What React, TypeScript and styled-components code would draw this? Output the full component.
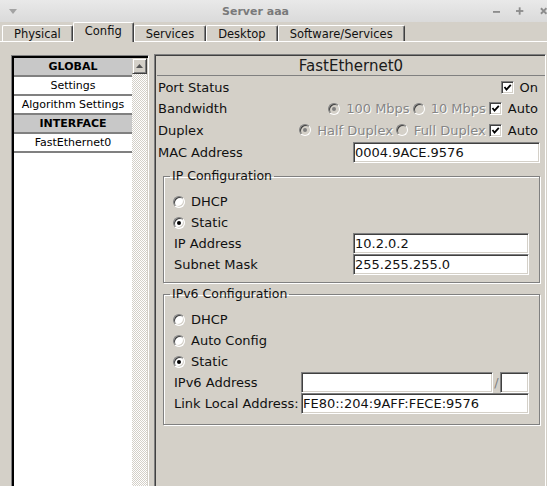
import React from "react";
import styled, { createGlobalStyle } from "styled-components";

const GlobalStyle = createGlobalStyle`
  html, body { margin: 0; padding: 0; background: #d4d0c8; }
  body { font-family: "DejaVu Sans", Verdana, sans-serif; color: #000; }
  #root { height: 100vh; }
`;

const Window = styled.div`
  height: 100vh;
  overflow: hidden;
  display: flex;
  flex-direction: column;
  background: #d4d0c8;
`;

const TitleBar = styled.div`
  flex: none;
  height: 22px;
  display: grid;
  grid-template-columns: 30px 1fr 66px;
  align-items: center;
  background: linear-gradient(#e9e9e9, #dadada);
`;

const MenuArrow = styled.span`
  display: flex;
  align-items: center;
  padding-left: 9px;
`;

const Title = styled.div`
  text-align: center;
  font-size: 11px;
  font-weight: bold;
  color: #7a7a7a;
`;

const WinButtons = styled.div`
  display: flex;
  align-items: center;
  gap: 16px;
  padding-left: 12px;
  overflow: hidden;
`;

const TabBar = styled.div`
  flex: none;
  height: 19px;
  display: flex;
  align-items: flex-end;
  padding-left: 2px;
  border-bottom: 1px solid #fff;
`;

const Tab = styled.div<{ $active?: boolean }>`
  box-sizing: border-box;
  height: ${(p) => (p.$active ? 20 : 16)}px;
  margin-bottom: ${(p) => (p.$active ? -1 : 0)}px;
  padding: 0 11px ${(p) => (p.$active ? 3 : 0)}px;
  display: flex;
  align-items: center;
  font-size: 11.5px;
  color: #111;
  background: #d4d0c8;
  border-top: 1px solid #fff;
  border-left: 1px solid #fff;
  border-right: 1px solid #404040;
  border-radius: 2px 2px 0 0;
  box-shadow: inset -1px 0 0 #808080;
`;

const Body = styled.div`
  flex: 1;
  min-height: 0;
  display: flex;
  padding: 13px 0 0 11px;
`;

const Sidebar = styled.div`
  flex: none;
  width: 138px;
  box-sizing: border-box;
  display: flex;
  padding: 2px 1px 0 2px;
  border-top: 1px solid #808080;
  border-left: 1px solid #808080;
  border-right: 1px solid #fff;
  box-shadow: inset 2px 2px 0 #000, inset -1px 0 0 #d4d0c8;
`;

const List = styled.div`
  flex: 1;
  background: #fff;
  display: flex;
  flex-direction: column;
`;

const ListHeader = styled.div`
  height: 17px;
  line-height: 17px;
  text-align: center;
  font-size: 11px;
  font-weight: bold;
  background: #c8c8c8;
  border-bottom: 2px solid #808080;
`;

const ListItem = styled.div`
  height: 17px;
  line-height: 17px;
  text-align: center;
  font-size: 11px;
  background: #fff;
  border-bottom: 2px solid #808080;
`;

const ScrollBar = styled.div`
  flex: none;
  width: 15px;
  display: flex;
  flex-direction: column;
`;

const ScrollButton = styled.div`
  box-sizing: border-box;
  height: 16px;
  display: flex;
  align-items: center;
  justify-content: center;
  background: #d4d0c8;
  border-top: 1px solid #d4d0c8;
  border-left: 1px solid #d4d0c8;
  border-right: 1px solid #404040;
  border-bottom: 1px solid #404040;
  box-shadow: inset 1px 1px 0 #fff, inset -1px -1px 0 #808080;
`;

const ScrollTrack = styled.div`
  flex: 1;
  background: repeating-conic-gradient(#ffffff 0% 25%, #d4d0c8 0% 50%) 0 0 / 2px 2px;
`;

const Panel = styled.div`
  flex: 1;
  min-width: 0;
  margin: -1px 1px 0 5px;
  padding: 2px 0 0 2px;
  display: flex;
  flex-direction: column;
  border-top: 1px solid #808080;
  border-left: 1px solid #808080;
  border-right: 1px solid #fff;
  box-shadow: inset 1px 1px 0 #404040;
`;

const PanelHeading = styled.div`
  height: 18px;
  line-height: 18px;
  text-align: center;
  font-size: 15px;
  color: #1a1a1a;
  border-bottom: 1px solid #808080;
`;

const PanelBody = styled.div`
  display: flex;
  flex-direction: column;
  padding: 0 5px 0 1px;
`;

const FormRow = styled.div<{ $h: number }>`
  height: ${(p) => p.$h}px;
  display: flex;
  align-items: center;
  justify-content: space-between;
  font-size: 13px;
  color: #111;
`;

const Options = styled.div`
  display: flex;
  align-items: center;
  gap: 3px;
  margin-right: 2px;
`;

const Option = styled.span<{ $disabled?: boolean }>`
  display: inline-flex;
  align-items: center;
  gap: 6px;
  font-size: 13px;
  color: ${(p) => (p.$disabled ? "#868686" : "#111")};
  text-shadow: ${(p) => (p.$disabled ? "1px 1px 0 #fff" : "none")};
`;

const RadioCircle = styled.span<{ $checked?: boolean; $disabled?: boolean }>`
  position: relative;
  flex: none;
  box-sizing: border-box;
  width: 12px;
  height: 12px;
  border-radius: 50%;
  background: ${(p) => (p.$disabled ? "#d4d0c8" : "#fff")};
  border: 1px solid;
  border-color: #808080 #fff #fff #808080;
  box-shadow: inset 1px 1px 0 #404040, inset -1px -1px 0 #d4d0c8;
  &::after {
    content: "";
    display: ${(p) => (p.$checked ? "block" : "none")};
    position: absolute;
    left: 3px;
    top: 3px;
    width: 4px;
    height: 4px;
    border-radius: 50%;
    background: ${(p) => (p.$disabled ? "#808080" : "#000")};
  }
`;

const CheckBox = styled.span`
  flex: none;
  box-sizing: border-box;
  width: 13px;
  height: 13px;
  display: flex;
  align-items: center;
  justify-content: center;
  background: #fff;
  border: 1px solid;
  border-color: #808080 #fff #fff #808080;
  box-shadow: inset 1px 1px 0 #404040, inset -1px -1px 0 #d4d0c8;
`;

const TextBox = styled.input<{ $w?: number }>`
  box-sizing: border-box;
  width: ${(p) => (p.$w ? `${p.$w}px` : "100%")};
  min-width: 0;
  height: 21px;
  margin: 0;
  padding: 0 1px;
  font-family: "DejaVu Sans", Verdana, sans-serif;
  font-size: 13px;
  color: #111;
  background: #fff;
  border: 1px solid;
  border-color: #808080 #fff #fff #808080;
  box-shadow: inset 1px 1px 0 #404040, inset -1px -1px 0 #d4d0c8;
  outline: none;
`;

const Group = styled.fieldset<{ $mt: number; $pb: number }>`
  margin: ${(p) => p.$mt}px 0 0 5px;
  padding: 8px 10px ${(p) => p.$pb}px 10px;
  min-width: 0;
  border: 1px solid #808080;
  box-shadow: 1px 1px 0 #fff, inset 1px 1px 0 #fff;
  font-size: 13px;
  color: #111;
`;

const Legend = styled.legend`
  font-size: 12.5px;
  line-height: 14px;
  padding: 0 2px;
  margin-left: -4px;
`;

const RadioRow = styled.div`
  height: 21px;
  display: flex;
  align-items: center;
  margin-left: -1px;
`;

const FieldRow = styled.div<{ $label: number }>`
  height: 21px;
  display: grid;
  grid-template-columns: ${(p) => p.$label}px 1fr;
  align-items: center;
`;

const AddressPair = styled.div`
  display: flex;
  align-items: center;
`;

const Slash = styled.span`
  width: 8px;
  text-align: center;
  color: #808080;
  font-size: 13px;
`;

function Radio({ label, checked, disabled }: { label: string; checked?: boolean; disabled?: boolean }) {
  return (
    <Option $disabled={disabled}>
      <RadioCircle $checked={checked} $disabled={disabled} />
      {label}
    </Option>
  );
}

function Check({ label }: { label: string }) {
  return (
    <Option>
      <CheckBox>
        <svg width="9" height="9" viewBox="0 0 9 9">
          <polyline points="1.5,4 3.5,6.5 7.8,1.8" fill="none" stroke="#000" strokeWidth="1.8" />
        </svg>
      </CheckBox>
      {label}
    </Option>
  );
}

const tabs = ["Physical", "Config", "Services", "Desktop", "Software/Services"];

export default function App() {
  return (
    <>
      <GlobalStyle />
      <Window>
        <TitleBar>
          <MenuArrow>
            <svg width="8" height="5" viewBox="0 0 8 5">
              <path d="M0 0H8L4 5Z" fill="#a3a3a3" />
            </svg>
          </MenuArrow>
          <Title>Server aaa</Title>
          <WinButtons>
            <svg width="8" height="8" viewBox="0 0 8 8">
              <rect x="0" y="4" width="8" height="2" fill="#8c8c8c" />
            </svg>
            <svg width="8" height="8" viewBox="0 0 8 8">
              <rect x="0" y="3" width="8" height="2" fill="#8c8c8c" />
              <rect x="3" y="0" width="2" height="8" fill="#8c8c8c" />
            </svg>
            <svg width="8" height="8" viewBox="0 0 8 8">
              <path d="M1 1L7 7M7 1L1 7" stroke="#8c8c8c" strokeWidth="2" />
            </svg>
          </WinButtons>
        </TitleBar>
        <TabBar>
          {tabs.map((t) => (
            <Tab key={t} $active={t === "Config"}>
              {t}
            </Tab>
          ))}
        </TabBar>
        <Body>
          <Sidebar>
            <List>
              <ListHeader>GLOBAL</ListHeader>
              <ListItem>Settings</ListItem>
              <ListItem>Algorithm Settings</ListItem>
              <ListHeader>INTERFACE</ListHeader>
              <ListItem>FastEthernet0</ListItem>
            </List>
            <ScrollBar>
              <ScrollButton>
                <svg width="7" height="4" viewBox="0 0 7 4">
                  <path d="M3.5 0L7 4H0Z" fill="#555" />
                </svg>
              </ScrollButton>
              <ScrollTrack />
            </ScrollBar>
          </Sidebar>
          <Panel>
            <PanelHeading>FastEthernet0</PanelHeading>
            <PanelBody>
              <FormRow $h={22}>
                <span>Port Status</span>
                <Options>
                  <Check label="On" />
                </Options>
              </FormRow>
              <FormRow $h={21}>
                <span>Bandwidth</span>
                <Options>
                  <Radio label="100 Mbps" checked disabled />
                  <Radio label="10 Mbps" disabled />
                  <Check label="Auto" />
                </Options>
              </FormRow>
              <FormRow $h={22}>
                <span>Duplex</span>
                <Options>
                  <Radio label="Half Duplex" checked disabled />
                  <Radio label="Full Duplex" disabled />
                  <Check label="Auto" />
                </Options>
              </FormRow>
              <FormRow $h={22}>
                <span>MAC Address</span>
                <TextBox $w={187} readOnly defaultValue="0004.9ACE.9576" />
              </FormRow>

              <Group $mt={6} $pb={7}>
                <Legend>IP Configuration</Legend>
                <RadioRow>
                  <Radio label="DHCP" />
                </RadioRow>
                <RadioRow>
                  <Radio label="Static" checked />
                </RadioRow>
                <FieldRow $label={179}>
                  <span>IP Address</span>
                  <TextBox readOnly defaultValue="10.2.0.2" />
                </FieldRow>
                <FieldRow $label={179}>
                  <span>Subnet Mask</span>
                  <TextBox readOnly defaultValue="255.255.255.0" />
                </FieldRow>
              </Group>

              <Group $mt={4} $pb={10}>
                <Legend>IPv6 Configuration</Legend>
                <RadioRow>
                  <Radio label="DHCP" />
                </RadioRow>
                <RadioRow>
                  <Radio label="Auto Config" />
                </RadioRow>
                <RadioRow>
                  <Radio label="Static" checked />
                </RadioRow>
                <FieldRow $label={127}>
                  <span>IPv6 Address</span>
                  <AddressPair>
                    <TextBox readOnly defaultValue="" />
                    <Slash>/</Slash>
                    <TextBox $w={34} readOnly defaultValue="" />
                  </AddressPair>
                </FieldRow>
                <FieldRow $label={127}>
                  <span>Link Local Address:</span>
                  <TextBox readOnly defaultValue="FE80::204:9AFF:FECE:9576" />
                </FieldRow>
              </Group>
            </PanelBody>
          </Panel>
        </Body>
      </Window>
    </>
  );
}
